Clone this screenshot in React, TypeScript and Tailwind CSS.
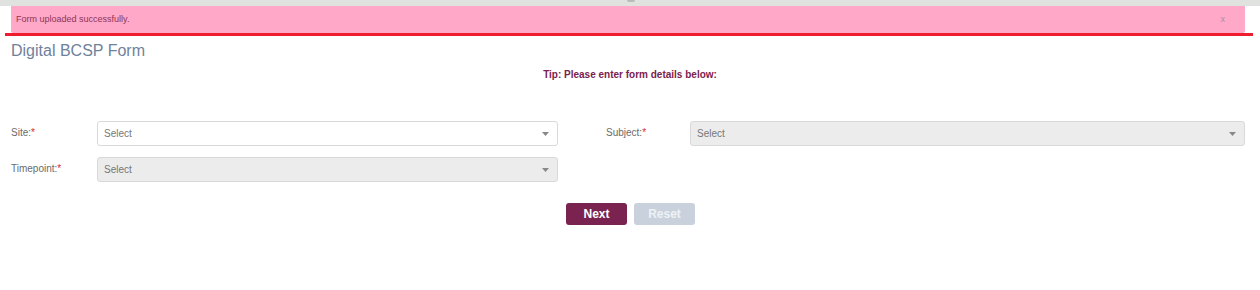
import React from 'react';

function Caret() {
  return (
    <svg width="7" height="4" viewBox="0 0 7 4" className="shrink-0">
      <path d="M0 0 L7 0 L3.5 4 Z" fill="#888" />
    </svg>
  );
}

function SelectBox({ disabled, className }: { disabled?: boolean; className?: string }) {
  return (
    <div
      className={
        'h-[25px] rounded-[3px] border border-[#d9d9d9] flex items-center justify-between pl-[6px] pr-[8px] text-[10px] text-[#777] ' +
        (disabled ? 'bg-[#ececec] ' : 'bg-white ') +
        (className ?? '')
      }
    >
      <span>Select</span>
      <Caret />
    </div>
  );
}

function Label({ text, className }: { text: string; className?: string }) {
  return (
    <div className={'text-[10px] text-[#6b6b6b] pt-[4px] ' + (className ?? '')}>
      {text}:<span className="text-[#e3262e]">*</span>
    </div>
  );
}

export default function App() {
  return (
    <div
      className="w-[1260px] h-[290px] bg-white overflow-hidden"
      style={{ fontFamily: '"Liberation Sans", Arial, sans-serif' }}
    >
      {/* top strip */}
      <div className="h-[6px] bg-[#e0e2df] flex justify-center">
        <div className="w-[8px] h-[2px] bg-[#b9bbb8] rounded-b-sm ml-[1px]" />
      </div>

      {/* alert */}
      <div className="ml-[5px] mr-[7px] border-b-[3px] border-[#ee1c2c]">
        <div className="ml-[6px] mr-[8px] h-[27px] bg-[#ffa8c8] rounded-b-[2px] flex items-center justify-between pl-[5px] pr-[20px]">
          <span className="text-[9px] text-[#8c3558]">Form uploaded successfully.</span>
          <span className="text-[9px] text-[#b8899c] leading-none">x</span>
        </div>
      </div>

      {/* heading */}
      <h1 className="pl-[11px] mt-[6px] text-[16px] leading-[18px] text-[#6f829b]">Digital BCSP Form</h1>

      <div className="mt-[7px] text-center text-[10px] font-bold text-[#7b2150]">
        Tip: Please enter form details below:
      </div>

      {/* form */}
      <div className="mt-[39px] pl-[11px] flex flex-col gap-[11px]">
        <div className="flex items-start">
          <Label text="Site" className="w-[86px]" />
          <SelectBox className="w-[461px]" />
          <Label text="Subject" className="w-[84px] ml-[48px]" />
          <SelectBox disabled className="w-[555px]" />
        </div>
        <div className="flex items-start">
          <Label text="Timepoint" className="w-[86px]" />
          <SelectBox disabled className="w-[461px]" />
        </div>
      </div>

      <div className="mt-[21px] flex justify-center gap-[7px] pl-[1px]">
        <button className="w-[61px] h-[22px] rounded-[3px] bg-[#7a2350] text-white text-[12px] font-bold">
          Next
        </button>
        <button className="w-[61px] h-[22px] rounded-[3px] bg-[#c9d1dc] text-[#eef1f5] text-[12px] font-bold">
          Reset
        </button>
      </div>
    </div>
  );
}
